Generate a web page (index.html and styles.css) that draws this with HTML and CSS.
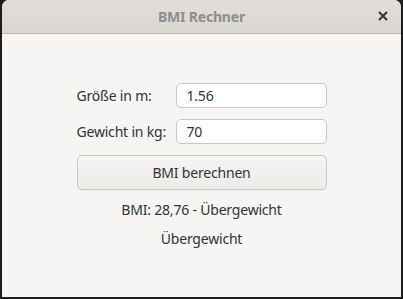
FILE: index.html
```html
<!DOCTYPE html>
<html lang="de">
<head>
  <meta charset="UTF-8" />
  <title>BMI Rechner</title>
  <link rel="stylesheet" href="styles.css">
</head>
<body>
  <div class="window">
    <header class="titlebar">
      <span class="title">BMI Rechner</span>
      <span class="close">
        <svg width="10" height="10" viewBox="0 0 10 10">
          <path d="M1 1 L9 9 M9 1 L1 9" stroke="#2e3436" stroke-width="2" />
        </svg>
      </span>
    </header>

    <main class="content">
      <div class="form">
        <label class="label">Größe in m:</label>
        <div class="entry">1.56</div>
        <label class="label">Gewicht in kg:</label>
        <div class="entry">70</div>
        <button class="button">BMI berechnen</button>
      </div>
      <p class="result">BMI: 28,76 - Übergewicht</p>
      <p class="result">Übergewicht</p>
    </main>
  </div>
</body>
</html>
```

FILE: styles.css
```css
body {
  margin: 0;
  background-color: #1c1c1c;
  font-family: "Noto Sans", "Open Sans", sans-serif;
  color: #2e3436;
}
.window {
  width: 399px;
  height: 297px;
  margin: 0 2px;
  background-color: #f6f5f4;
  border-radius: 7px 7px 0 0;
  overflow: hidden;
  display: flex;
  flex-direction: column;
}
.titlebar {
  height: 33px;
  border-bottom: 1px solid #c0b5ad;
  background: linear-gradient(#e1dedb, #dad6d2);
  display: flex;
  align-items: center;
  justify-content: center;
  position: relative;
}
.title {
  font-size: 14px;
  font-weight: bold;
  letter-spacing: -0.2px;
  color: #8b8e8f;
}
.close {
  position: absolute;
  right: 13px;
  top: 11px;
  display: flex;
}
.content {
  display: flex;
  flex-direction: column;
  align-items: center;
  padding-top: 49px;
}
.form {
  display: grid;
  grid-template-columns: auto 151px;
  width: 250px;
  column-gap: 8px;
  row-gap: 11px;
  align-items: center;
  font-size: 14px;
  letter-spacing: -0.2px;
}
.label {
  white-space: nowrap;
}
.entry {
  box-sizing: border-box;
  height: 25px;
  border: 1px solid #cdc7c2;
  border-radius: 5px;
  background-color: #ffffff;
  padding: 0 10px;
  line-height: 23px;
}
.button {
  grid-column: 1 / 3;
  height: 35px;
  border: 1px solid #cdc7c2;
  border-radius: 5px;
  background: linear-gradient(#f6f5f4, #edebe9);
  box-shadow: 0 1px 0 rgba(0, 0, 0, 0.05);
  font-family: inherit;
  font-size: 14px;
  letter-spacing: -0.2px;
  color: #2e3436;
}
.result {
  margin: 0;
  font-size: 14px;
  letter-spacing: -0.2px;
  line-height: 29px;
}
.result:first-of-type {
  margin-top: 5px;
}
```
